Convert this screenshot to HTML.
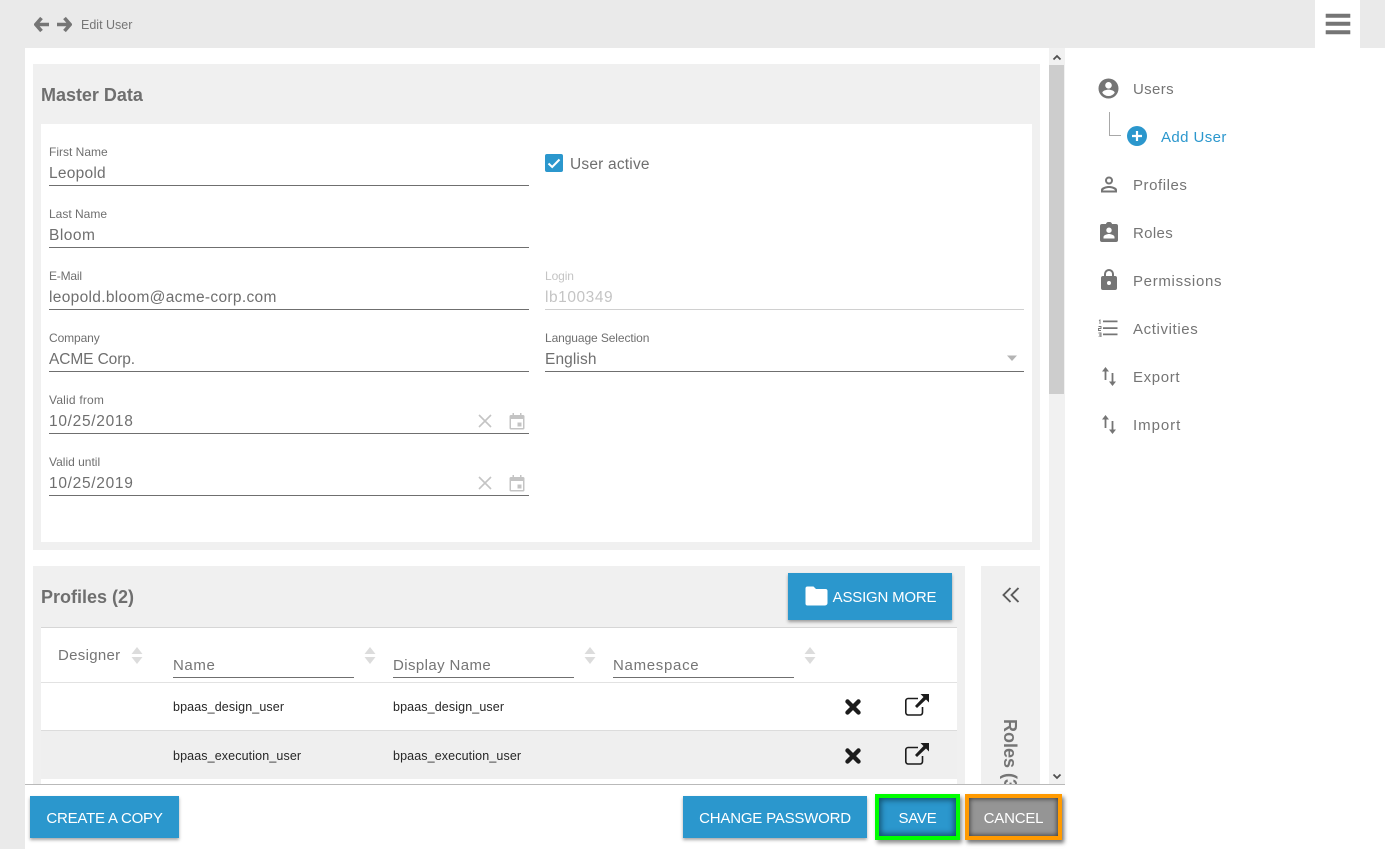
<!DOCTYPE html>
<html><head><meta charset="utf-8"><style>
*{box-sizing:border-box}
html,body{margin:0;padding:0;width:1385px;height:849px;overflow:hidden;background:#fff;font-family:"Liberation Sans",sans-serif}
.a{position:absolute}
.t{position:absolute;white-space:nowrap;line-height:20px;height:20px}
.lb{font-size:12px;color:#6f6f6f;letter-spacing:-.1px}
.v{font-size:15.5px;color:#6f6f6f;letter-spacing:.3px}
.ln{position:absolute;height:1px;background:#6f6f6f}
.nav{font-size:15px;color:#757575;letter-spacing:.35px}
.btn{position:absolute;background:#2b97cd;color:#fff;font-size:15px;text-align:center;line-height:45px;height:42px;box-shadow:0 2px 3px rgba(0,0,0,.35);white-space:nowrap;letter-spacing:-.2px}
.th{font-size:15px;color:#757575;letter-spacing:.3px}
.td{font-size:12.5px;color:#262626;letter-spacing:.12px}
svg{position:absolute;display:block}
</style></head><body>
<div class="a" style="left:0;top:0;width:1385px;height:48px;background:#eaeaea"></div>
<div class="a" style="left:0;top:48px;width:25px;height:801px;background:#eaeaea"></div>
<div class="a" style="left:1315px;top:0;width:45px;height:48px;background:#fff"></div>

<svg style="left:34px;top:16px" width="16" height="17" viewBox="0 0 16 17"><path d="M7.500 2 1.800 8.500 7.500 15M2.500 8.500H15" fill="none" stroke="#757575" stroke-width="3.600"/></svg>
<svg style="left:56px;top:16px" width="16" height="17" viewBox="0 0 16 17"><path d="M8.500 2 14.200 8.500 8.500 15M13.500 8.500H1" fill="none" stroke="#757575" stroke-width="3.600"/></svg>
<div class="t" style="left:81px;top:15px;font-size:12.5px;color:#757575;letter-spacing:0">Edit User</div>
<svg style="left:1325px;top:13px" width="26" height="22" viewBox="0 0 26 22"><path d="M1 1h24v3.500H1zM1 9h24v3.500H1zM1 17.500h24V21H1z" fill="#757575" stroke="#757575" stroke-width=".6" stroke-linejoin="round"/></svg>

<!-- Master data -->
<div class="a" style="left:33px;top:64px;width:1007px;height:486px;background:#f0f0f0"></div>
<div class="a" style="left:41px;top:124px;width:991px;height:418px;background:#fff"></div>
<div class="t" style="left:41px;top:85px;font-size:18px;font-weight:bold;color:#6f6f6f;letter-spacing:-.02px">Master Data</div>

<div class="t lb" style="left:49px;top:142px;letter-spacing:0">First Name</div>
<div class="t v" style="left:49px;top:164px;letter-spacing:.25px">Leopold</div>
<div class="ln" style="left:49px;top:185px;width:480px"></div>

<div class="t lb" style="left:49px;top:204px;letter-spacing:0">Last Name</div>
<div class="t v" style="left:49px;top:226px;letter-spacing:.5px">Bloom</div>
<div class="ln" style="left:49px;top:247px;width:480px"></div>

<div class="t lb" style="left:49px;top:266px;letter-spacing:-.2px">E-Mail</div>
<div class="t v" style="left:49px;top:288px;letter-spacing:.32px">leopold.bloom@acme-corp.com</div>
<div class="ln" style="left:49px;top:309px;width:480px"></div>

<div class="t lb" style="left:49px;top:328px">Company</div>
<div class="t v" style="left:49px;top:350px;letter-spacing:-.1px">ACME Corp.</div>
<div class="ln" style="left:49px;top:371px;width:480px"></div>

<div class="t lb" style="left:49px;top:390px;letter-spacing:.2px">Valid from</div>
<div class="t v" style="left:49px;top:412px;letter-spacing:.7px">10/25/2018</div>
<div class="ln" style="left:49px;top:433px;width:480px"></div>

<div class="t lb" style="left:49px;top:452px;letter-spacing:0">Valid until</div>
<div class="t v" style="left:49px;top:474px;letter-spacing:.7px">10/25/2019</div>
<div class="ln" style="left:49px;top:495px;width:480px"></div>

<svg style="left:478px;top:414px" width="14" height="14" viewBox="0 0 14 14"><path d="M1 1 13 13M13 1 1 13" stroke="#c4c4c4" stroke-width="1.6" fill="none"/></svg>
<svg style="left:478px;top:476px" width="14" height="14" viewBox="0 0 14 14"><path d="M1 1 13 13M13 1 1 13" stroke="#c4c4c4" stroke-width="1.6" fill="none"/></svg>
<svg style="left:509px;top:413px" width="16" height="17" viewBox="0 0 16 17"><path fill-rule="evenodd" d="M2 2h1.500V0h1.500v2h6V0h1.500v2H14a1.500 1.500 0 0 1 1.500 1.500V15a1.500 1.500 0 0 1-1.500 1.500H2A1.500 1.500 0 0 1 .5 15V3.500A1.500 1.500 0 0 1 2 2zM2 6v9h12V6zM8.500 9.500H12.500V13.500H8.500z" fill="#c4c4c4"/></svg>
<svg style="left:509px;top:475px" width="16" height="17" viewBox="0 0 16 17"><path fill-rule="evenodd" d="M2 2h1.500V0h1.500v2h6V0h1.500v2H14a1.500 1.500 0 0 1 1.500 1.500V15a1.500 1.500 0 0 1-1.500 1.500H2A1.500 1.500 0 0 1 .5 15V3.500A1.500 1.500 0 0 1 2 2zM2 6v9h12V6zM8.500 9.500H12.500V13.500H8.500z" fill="#c4c4c4"/></svg>

<div class="a" style="left:545px;top:154px;width:18px;height:18px;background:#2b97cd;border-radius:2px"></div>
<svg style="left:545px;top:154px" width="18" height="18" viewBox="0 0 18 18"><path d="M3.500 9.500 7.200 13 14.500 5.500" fill="none" stroke="#fff" stroke-width="2"/></svg>
<div class="t v" style="left:570px;top:155px;letter-spacing:.2px">User active</div>

<div class="t lb" style="left:545px;top:266px;color:#c4c4c4">Login</div>
<div class="t v" style="left:545px;top:288px;color:#c4c4c4;letter-spacing:.55px">lb100349</div>
<div class="ln" style="left:545px;top:309px;width:479px;background:#d0d0d0"></div>

<div class="t lb" style="left:545px;top:328px">Language Selection</div>
<div class="t v" style="left:545px;top:350px;letter-spacing:.1px">English</div>
<div class="ln" style="left:545px;top:371px;width:479px"></div>
<svg style="left:1006px;top:355px" width="12" height="7" viewBox="0 0 12 7"><path d="M1 .5h10L6 6z" fill="#b4b4b4"/></svg>

<!-- Profiles -->
<div class="a" style="left:33px;top:566px;width:932px;height:218px;background:#f0f0f0"></div>
<div class="t" style="left:41px;top:587px;font-size:18px;font-weight:bold;color:#6f6f6f;letter-spacing:0">Profiles (2)</div>
<div class="btn" style="left:788px;top:573px;width:164px;height:47px;line-height:49px;padding-left:29px;font-size:15px">ASSIGN MORE</div>
<svg style="left:805px;top:586px" width="23" height="20" viewBox="0 0 23 20"><path d="M2.500 .5H8.500L11 3H20.500A2 2 0 0 1 22.500 5V17A2.500 2.500 0 0 1 20 19.500H2.500A2 2 0 0 1 .5 17.500V2.500A2 2 0 0 1 2.500 .5z" fill="#fff"/></svg>

<div class="a" style="left:41px;top:627px;width:916px;height:157px;background:#fff"></div>
<div class="a" style="left:41px;top:627px;width:916px;height:1px;background:#d6d6d6"></div>
<div class="a" style="left:41px;top:682px;width:916px;height:1px;background:#e2e2e2"></div>
<div class="a" style="left:41px;top:730px;width:916px;height:1px;background:#dcdcdc"></div>
<div class="a" style="left:41px;top:731px;width:916px;height:48px;background:#efefef"></div>

<div class="t th" style="left:58px;top:646px;letter-spacing:.3px">Designer</div>
<div class="t th" style="left:173px;top:656px;letter-spacing:.6px">Name</div>
<div class="ln" style="left:173px;top:677px;width:181px"></div>
<div class="t th" style="left:393px;top:656px;letter-spacing:.4px">Display Name</div>
<div class="ln" style="left:393px;top:677px;width:181px"></div>
<div class="t th" style="left:613px;top:656px;letter-spacing:.7px">Namespace</div>
<div class="ln" style="left:613px;top:677px;width:181px"></div>

<svg style="left:131px;top:647px" width="12" height="17" viewBox="0 0 12 17"><path d="M6 0 11.500 7H.5zM.5 10H11.500L6 17z" fill="#dcdcdc"/></svg>
<svg style="left:364px;top:647px" width="12" height="17" viewBox="0 0 12 17"><path d="M6 0 11.500 7H.5zM.5 10H11.500L6 17z" fill="#dcdcdc"/></svg>
<svg style="left:584px;top:647px" width="12" height="17" viewBox="0 0 12 17"><path d="M6 0 11.500 7H.5zM.5 10H11.500L6 17z" fill="#dcdcdc"/></svg>
<svg style="left:804px;top:647px" width="12" height="17" viewBox="0 0 12 17"><path d="M6 0 11.500 7H.5zM.5 10H11.500L6 17z" fill="#dcdcdc"/></svg>

<div class="t td" style="left:173px;top:697px">bpaas_design_user</div>
<div class="t td" style="left:393px;top:697px">bpaas_design_user</div>
<div class="t td" style="left:173px;top:746px">bpaas_execution_user</div>
<div class="t td" style="left:393px;top:746px">bpaas_execution_user</div>

<svg style="left:845px;top:699px" width="16" height="16" viewBox="0 0 16 16"><path d="M2.500 2.500 13.500 13.500M13.500 2.500 2.500 13.500" stroke="#1c1c1c" stroke-width="4.400" stroke-linecap="round"/></svg>
<svg style="left:845px;top:748px" width="16" height="16" viewBox="0 0 16 16"><path d="M2.500 2.500 13.500 13.500M13.500 2.500 2.500 13.500" stroke="#1c1c1c" stroke-width="4.400" stroke-linecap="round"/></svg>
<svg style="left:905px;top:694px" width="24" height="22" viewBox="0 0 24 22"><path d="M13 4.500H3A2.500 2.500 0 0 0 .8 7V18.500A2.500 2.500 0 0 0 3 21H15A2.500 2.500 0 0 0 17.500 18.500V13" fill="none" stroke="#1c1c1c" stroke-width="1.600"/><path d="M15.500 0H24V8.500L21 5.500 12 14 10 12 18.500 3z" fill="#1c1c1c"/></svg>
<svg style="left:905px;top:743px" width="24" height="22" viewBox="0 0 24 22"><path d="M13 4.500H3A2.500 2.500 0 0 0 .8 7V18.500A2.500 2.500 0 0 0 3 21H15A2.500 2.500 0 0 0 17.500 18.500V13" fill="none" stroke="#1c1c1c" stroke-width="1.600"/><path d="M15.500 0H24V8.500L21 5.500 12 14 10 12 18.500 3z" fill="#1c1c1c"/></svg>

<!-- Roles collapsed -->
<div class="a" style="left:981px;top:566px;width:59px;height:218px;background:#f0f0f0;overflow:hidden">
<svg style="left:21px;top:21px" width="18" height="16" viewBox="0 0 18 16"><path d="M8.500 1 1.500 8 8.500 15M16.500 1 9.500 8 16.500 15" fill="none" stroke="#5a5a5a" stroke-width="1.900"/></svg>
<div class="t" style="left:39px;top:153px;font-size:18px;font-weight:bold;color:#757575;transform-origin:0 0;transform:rotate(90deg);letter-spacing:0">Roles (3)</div>
</div>

<!-- Scrollbar -->
<div class="a" style="left:1049px;top:48px;width:16px;height:737px;background:#f1f1f1"></div>
<div class="a" style="left:1049px;top:65px;width:15px;height:329px;background:#cdcdcd"></div>
<svg style="left:1052px;top:54px" width="10" height="7" viewBox="0 0 10 7"><path d="M1.500 5.500 5 2 8.500 5.500" fill="none" stroke="#505050" stroke-width="1.800"/></svg>
<svg style="left:1052px;top:773px" width="10" height="7" viewBox="0 0 10 7"><path d="M1.500 1.500 5 5 8.500 1.500" fill="none" stroke="#505050" stroke-width="1.800"/></svg>

<!-- Footer -->
<div class="a" style="left:25px;top:784px;width:1040px;height:65px;background:#fff"></div>
<div class="a" style="left:25px;top:784px;width:1040px;height:1px;background:#b9b9b9"></div>
<div class="btn" style="left:30px;top:796px;width:149px">CREATE A COPY</div>
<div class="btn" style="left:683px;top:796px;width:184px;letter-spacing:-.2px">CHANGE PASSWORD</div>
<div class="btn" style="left:875px;top:794px;width:85px;height:46px;line-height:41px;border:4px solid #00ff00;box-shadow:inset 0 0 6px 2px #14506e,2px 3px 4px rgba(0,0,0,.45)">SAVE</div>
<div class="btn" style="left:965px;top:794px;width:97px;height:46px;line-height:41px;border:4px solid #ff9a00;background:#959595;box-shadow:inset 0 0 5px 1px #444,2px 3px 4px rgba(0,0,0,.55)">CANCEL</div>

<!-- Side nav -->
<svg style="left:1098px;top:78px" width="21" height="21" viewBox="0 0 21 21"><path fill-rule="evenodd" d="M10.500 .5a10 10 0 1 0 0 20 10 10 0 0 0 0-20zM10.500 4a3.300 3.300 0 1 1 0 6.600 3.300 3.300 0 0 1 0-6.600zM10.500 18a7.600 7.600 0 0 1-6.200-3.300c.1-2 4.100-3.100 6.200-3.100s6.100 1.100 6.200 3.100a7.600 7.600 0 0 1-6.200 3.300z" fill="#757575"/></svg>
<div class="t nav" style="left:1133px;top:80px">Users</div>
<div class="a" style="left:1109px;top:112px;width:12px;height:24px;border-left:1px solid #a8a8a8;border-bottom:1px solid #a8a8a8"></div>
<div class="a" style="left:1127px;top:126px;width:20px;height:20px;border-radius:50%;background:#2b97cd"></div>
<svg style="left:1127px;top:126px" width="20" height="20" viewBox="0 0 20 20"><path d="M10 5v10M5 10h10" stroke="#fff" stroke-width="2.200"/></svg>
<div class="t nav" style="left:1161px;top:128px;color:#2b97cd;letter-spacing:.4px">Add User</div>

<svg style="left:1100px;top:176px" width="18" height="17" viewBox="0 0 18 17"><path fill-rule="evenodd" d="M9 .5a4 4 0 1 1 0 8 4 4 0 0 1 0-8zM9 2.500a2 2 0 1 0 0 4 2 2 0 0 0 0-4zM9 10c2.800 0 8 1.300 8 3.800V16.500H1V13.800C1 11.300 6.200 10 9 10zM9 12c-2.500 0-5.700 1.100-6 2.500H15C14.700 13.100 11.500 12 9 12z" fill="#757575"/></svg>
<div class="t nav" style="left:1133px;top:176px;letter-spacing:.55px">Profiles</div>

<svg style="left:1100px;top:222px" width="18" height="20" viewBox="0 0 18 20"><path fill-rule="evenodd" d="M2 2H6A3 2.200 0 0 1 12 2H16A2 2 0 0 1 18 4V18A2 2 0 0 1 16 20H2A2 2 0 0 1 0 18V4A2 2 0 0 1 2 2zM9 5.500a2.700 2.700 0 1 0 0 5.400 2.700 2.700 0 0 0 0-5.400zM3.500 16.500H14.500V15C14.500 13.200 11 12 9 12S3.500 13.200 3.500 15z" fill="#757575"/></svg>
<div class="t nav" style="left:1133px;top:224px">Roles</div>

<svg style="left:1101px;top:269px" width="16" height="21" viewBox="0 0 16 21"><path fill-rule="evenodd" d="M3 7V5a5 5 0 0 1 10 0V7H14A2 2 0 0 1 16 9V19A2 2 0 0 1 14 21H2A2 2 0 0 1 0 19V9A2 2 0 0 1 2 7zM5 7H11V5a3 3 0 0 0-6 0zM8 12a2 2 0 1 0 0 4 2 2 0 0 0 0-4z" fill="#757575"/></svg>
<div class="t nav" style="left:1133px;top:272px;letter-spacing:.68px">Permissions</div>

<svg style="left:1098px;top:319px" width="21" height="18" viewBox="0 0 21 18"><path d="M5 1.500h14.500v1.700H5zM5 8.300h14.500V10H5zM5 14.500h14.500v1.700H5z" fill="#757575"/><path d="M1 1.500 2 1V5M.5 7.500h2.500V9.500H.5v2h2.500M.5 14h2.500v4H.5M1 16h2" fill="none" stroke="#757575" stroke-width=".9"/></svg>
<div class="t nav" style="left:1133px;top:320px;letter-spacing:.62px">Activities</div>

<svg style="left:1102px;top:367px" width="15" height="19" viewBox="0 0 15 19"><path d="M3.500 0 7 4.500H4.400V13H2.600V4.500H0zM9.600 6H11.400V14.500H14L10.500 19 7 14.500H9.600z" fill="#757575"/></svg>
<div class="t nav" style="left:1133px;top:368px;letter-spacing:.65px">Export</div>

<svg style="left:1102px;top:415px" width="15" height="19" viewBox="0 0 15 19"><path d="M3.500 0 7 4.500H4.400V13H2.600V4.500H0zM9.600 6H11.400V14.500H14L10.500 19 7 14.500H9.600z" fill="#757575"/></svg>
<div class="t nav" style="left:1133px;top:416px;letter-spacing:.95px">Import</div>
</body></html>
